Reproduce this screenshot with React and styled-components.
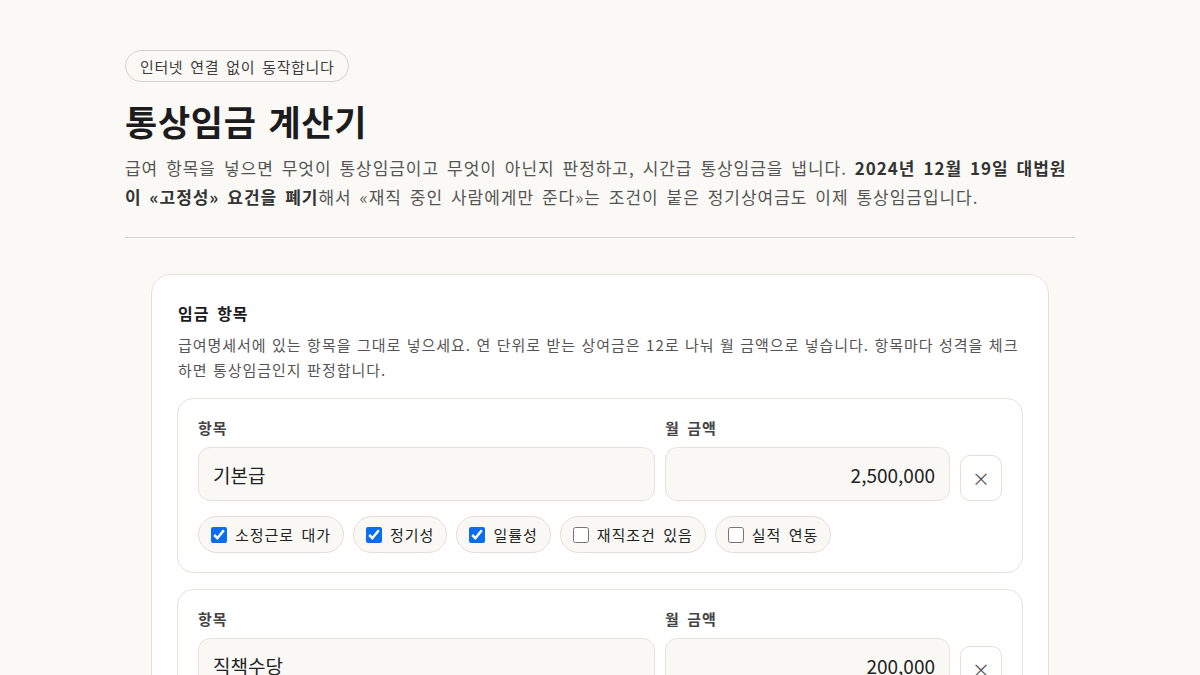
import styled, { createGlobalStyle } from "styled-components";
import { useState } from "react";

const GlobalStyle = createGlobalStyle`
  * { box-sizing: border-box; }
  body {
    margin: 0;
    background: #faf9f6;
    color: #1f1f1f;
    font-family: "Noto Sans CJK KR", "Noto Sans", sans-serif;
    letter-spacing: 0.06em;
    word-spacing: 0.2em;
  }
`;

const FLAGS = ["소정근로 대가", "정기성", "일률성", "재직조건 있음", "실적 연동"];

const initialItems = [
  { id: 1, name: "기본급", amount: "2,500,000", flags: [true, true, true, false, false] },
  { id: 2, name: "직책수당", amount: "200,000", flags: [true, true, true, false, false] },
];

export default function App() {
  const [items, setItems] = useState(initialItems);

  const toggle = (id, i) =>
    setItems((prev) =>
      prev.map((it) =>
        it.id === id
          ? { ...it, flags: it.flags.map((f, j) => (j === i ? !f : f)) }
          : it
      )
    );

  const remove = (id) => setItems((prev) => prev.filter((it) => it.id !== id));

  return (
    <>
      <GlobalStyle />
      <Page>
        <Badge>인터넷 연결 없이 동작합니다</Badge>
        <Title>통상임금 계산기</Title>
        <Lead>
          급여 항목을 넣으면 무엇이 통상임금이고 무엇이 아닌지 판정하고, 시간급
          통상임금을 냅니다. <strong>2024년 12월 19일 대법원이 «고정성» 요건을 폐기</strong>
          해서 «재직 중인 사람에게만 준다»는 조건이 붙은 정기상여금도 이제
          통상임금입니다.
        </Lead>
        <Divider />
        <Card>
          <CardTitle>임금 항목</CardTitle>
          <CardDesc>
            급여명세서에 있는 항목을 그대로 넣으세요. 연 단위로 받는 상여금은 12로
            나눠 월 금액으로 넣습니다. 항목마다 성격을 체크하면 통상임금인지
            판정합니다.
          </CardDesc>
          <ItemList>
            {items.map((it) => (
              <Item key={it.id}>
                <FieldRow>
                  <Field>
                    <Label>항목</Label>
                    <Input defaultValue={it.name} />
                  </Field>
                  <Field>
                    <Label>월 금액</Label>
                    <Input $align="right" defaultValue={it.amount} />
                  </Field>
                  <RemoveButton onClick={() => remove(it.id)}>×</RemoveButton>
                </FieldRow>
                <Chips>
                  {FLAGS.map((f, i) => (
                    <Chip key={f}>
                      <input
                        type="checkbox"
                        checked={it.flags[i]}
                        onChange={() => toggle(it.id, i)}
                      />
                      {f}
                    </Chip>
                  ))}
                </Chips>
              </Item>
            ))}
          </ItemList>
        </Card>
      </Page>
    </>
  );
}

const Page = styled.main`
  width: 950px;
  margin: 0 auto;
  padding-top: 50px;
`;

const Badge = styled.span`
  display: inline-flex;
  align-items: center;
  height: 32px;
  padding: 0 14px;
  border: 1px solid #d6d2ca;
  border-radius: 999px;
  font-size: 15px;
  letter-spacing: 0.04em;
  color: #3d3d3d;
  background: #faf9f6;
`;

const Title = styled.h1`
  margin: 15px 0 0;
  font-size: 35px;
  font-weight: 700;
  line-height: 48px;
  color: #1c1c1c;
  letter-spacing: 0.02em;
`;

const Lead = styled.p`
  margin: 8px 0 0;
  font-size: 17px;
  line-height: 29px;
  color: #555;

  strong {
    font-weight: 700;
    color: #333;
  }
`;

const Divider = styled.hr`
  margin: 26px 0 0;
  border: 0;
  border-top: 1px solid #d9d6d0;
`;

const Card = styled.section`
  margin: 36px 26px 0;
  padding: 26px 25px 24px;
  background: #fff;
  border: 1px solid #e6e2da;
  border-radius: 20px;
`;

const CardTitle = styled.h2`
  margin: 0 0 0 1px;
  font-size: 16px;
  font-weight: 700;
  line-height: 24px;
  color: #1c1c1c;
`;

const CardDesc = styled.p`
  margin: 7px 0 0 1px;
  font-size: 15px;
  line-height: 25px;
  word-spacing: 0.08em;
  color: #555;
`;

const ItemList = styled.div`
  display: flex;
  flex-direction: column;
  gap: 16px;
  margin-top: 16px;
`;

const Item = styled.div`
  padding: 18px 20px 18px;
  border: 1px solid #e6e2da;
  border-radius: 16px;
  background: #fff;
`;

const FieldRow = styled.div`
  display: grid;
  grid-template-columns: 457px 285px 42px;
  gap: 10px;
  align-items: end;
`;

const Field = styled.label`
  display: flex;
  flex-direction: column;
  gap: 8px;
`;

const Label = styled.span`
  font-size: 15px;
  font-weight: 600;
  line-height: 22px;
  color: #444;
`;

const Input = styled.input`
  height: 54px;
  padding: 0 14px;
  border: 1px solid #e6e2da;
  border-radius: 12px;
  background: #f9f8f5;
  font-family: inherit;
  font-size: 19px;
  letter-spacing: 0;
  color: #222;
  text-align: ${(p) => p.$align || "left"};
  outline: none;
`;

const RemoveButton = styled.button`
  height: 46px;
  width: 42px;
  border: 1px solid #e3dfd7;
  border-radius: 10px;
  background: #fff;
  color: #555;
  font-size: 18px;
  font-family: inherit;
  cursor: pointer;
`;

const Chips = styled.div`
  display: flex;
  flex-wrap: wrap;
  gap: 9px;
  margin-top: 15px;
  padding-bottom: 1px;
`;

const Chip = styled.label`
  display: inline-flex;
  align-items: center;
  gap: 6px;
  height: 37px;
  padding: 0 12px;
  border: 1px solid #e3dfd7;
  border-radius: 999px;
  background: #f9f8f5;
  font-size: 15px;
  color: #222;
  cursor: pointer;

  input {
    width: 16px;
    height: 16px;
    margin: 0 2px 0 0;
    accent-color: #0a6cf0;
  }
`;
